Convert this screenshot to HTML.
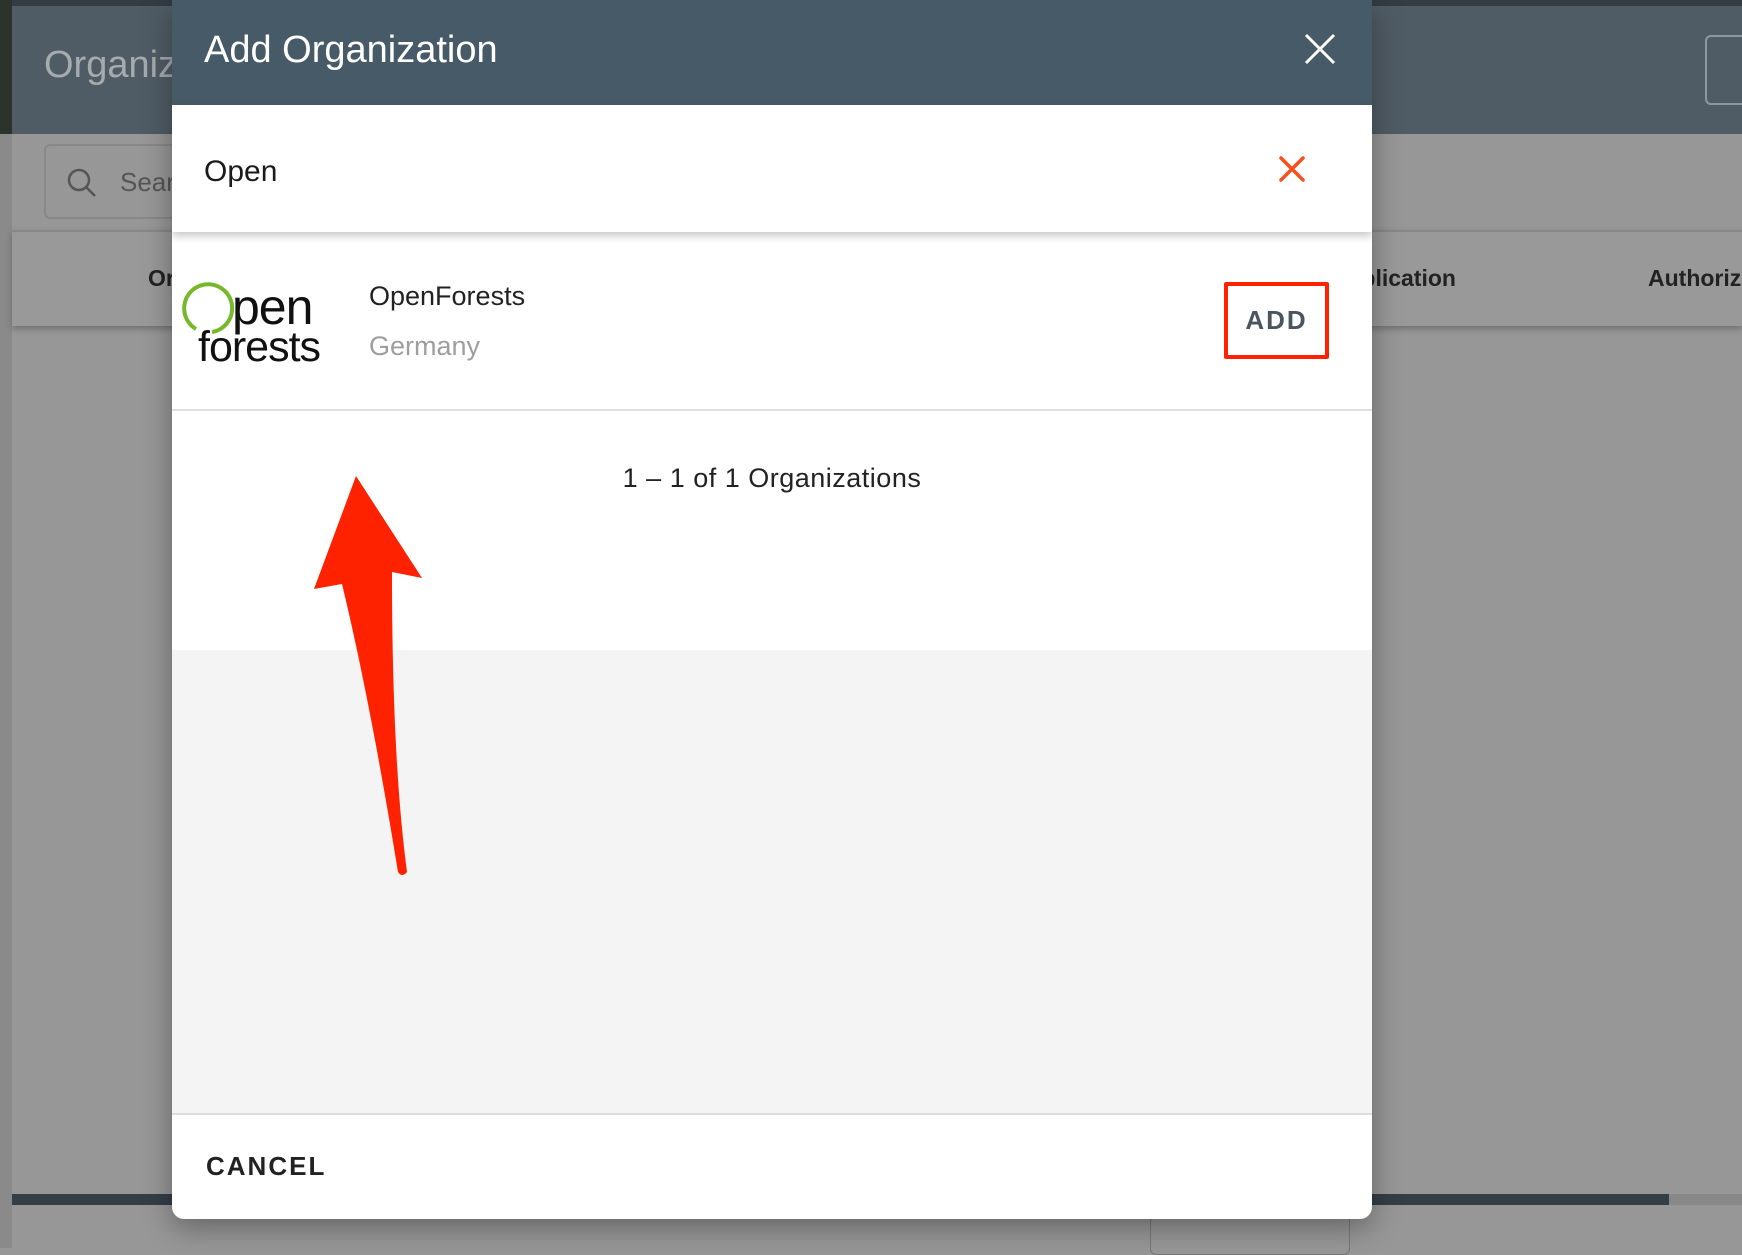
<!DOCTYPE html>
<html><head><meta charset="utf-8"><style>
*{margin:0;padding:0;box-sizing:border-box}
body{width:1742px;height:1248px;overflow:hidden;background:#979797;font-family:"Liberation Sans",sans-serif;position:relative}
.abs{position:absolute}
</style></head><body>
<div class="abs" style="left:0;top:0;width:1742px;height:6px;background:#333c43"></div>
<div class="abs" style="left:0;top:6px;width:1742px;height:128px;background:#505c65"></div>
<div class="abs" style="left:0;top:0;width:12px;height:134px;background:#2c332c"></div>
<div class="abs" style="left:0;top:134px;width:12px;height:1114px;background:#8a8a8a"></div>
<div class="abs" style="left:44px;top:44px;font-size:38px;color:#a6abae">Organiz</div>
<div class="abs" style="left:1705px;top:35px;width:60px;height:70px;border:2px solid #8f989e;border-radius:6px"></div>
<div class="abs" style="left:44px;top:144px;width:160px;height:75px;border:2px solid #888;border-radius:6px"></div>
<svg class="abs" style="left:66px;top:167px" width="32" height="32" viewBox="0 0 32 32"><circle cx="13" cy="13" r="10" fill="none" stroke="#555" stroke-width="2.5"/><line x1="20" y1="20" x2="29" y2="29" stroke="#555" stroke-width="2.5"/></svg>
<div class="abs" style="left:120px;top:167px;font-size:26px;color:#555">Sear</div>
<div class="abs" style="left:12px;top:230px;width:1730px;height:96px;background:#999;border-top:2px solid #888;box-shadow:0 3px 6px rgba(0,0,0,.25)"></div>
<div class="abs" style="left:148px;top:265px;font-size:23px;font-weight:bold;color:#222">Or</div>
<div class="abs" style="left:1332px;top:265px;font-size:23px;font-weight:bold;color:#222">Publication</div>
<div class="abs" style="left:1648px;top:265px;font-size:23px;font-weight:bold;color:#222">Authorization</div>
<div class="abs" style="left:12px;top:1194px;width:1657px;height:11px;background:#343e45"></div>
<div class="abs" style="left:1669px;top:1194px;width:73px;height:11px;background:#888"></div>
<div class="abs" style="left:1150px;top:1215px;width:200px;height:40px;border:1px solid #777;border-radius:6px"></div>

<div class="abs" style="left:172px;top:0;width:1200px;height:1219px;background:#fff;border-radius:0 0 12px 12px;overflow:hidden;box-shadow:0 8px 30px rgba(0,0,0,.35)">
  <div class="abs" style="left:0;top:0;width:1200px;height:105px;background:#475a67"></div>
  <div class="abs" style="left:32px;top:29px;font-size:38px;color:#fff">Add Organization</div>
  <svg class="abs" style="left:1132px;top:33px" width="32" height="32" viewBox="0 0 32 32"><path d="M2 2L30 30M30 2L2 30" stroke="#fff" stroke-width="3"/></svg>
  <div class="abs" style="left:0;top:105px;width:1200px;height:127px;background:#fff;box-shadow:0 4px 8px rgba(0,0,0,.22);z-index:2"></div>
  <div class="abs" style="left:32px;top:155px;font-size:30px;color:#1a1a1a;z-index:3">Open</div>
  <svg class="abs" style="left:1106px;top:155px;z-index:3" width="28" height="28" viewBox="0 0 28 28"><path d="M3 3L25 25M25 3L3 25" stroke="#f4511e" stroke-width="3.5" stroke-linecap="round"/></svg>
  <svg class="abs" style="left:8px;top:274px" width="160" height="95" viewBox="0 0 160 95">
    <path d="M16 55 A24 24 0 1 1 32 58" fill="none" stroke="#76b82a" stroke-width="4"/>
    <text x="52" y="50" font-family="Liberation Sans,sans-serif" font-size="50" fill="#111" letter-spacing="-1">pen</text>
    <text x="18" y="87" font-family="Liberation Sans,sans-serif" font-size="43" fill="#111" letter-spacing="-1">forests</text>
  </svg>
  <div class="abs" style="left:197px;top:281px;font-size:27px;color:#222">OpenForests</div>
  <div class="abs" style="left:197px;top:331px;font-size:27px;color:#9e9e9e">Germany</div>
  <div class="abs" style="left:1052px;top:282px;width:105px;height:77px;border:4px solid #ff2200;border-radius:2px;display:flex;align-items:center;justify-content:center;font-size:26px;letter-spacing:2px;color:#4a5560;font-weight:bold">ADD</div>
  <div class="abs" style="left:0;top:409px;width:1200px;height:2px;background:#e0e0e0"></div>
  <div class="abs" style="left:0;top:463px;width:1200px;text-align:center;font-size:27px;color:#222;letter-spacing:0.5px">1 – 1 of 1 Organizations</div>
  <div class="abs" style="left:0;top:650px;width:1200px;height:463px;background:#f4f4f4"></div>
  <div class="abs" style="left:0;top:1113px;width:1200px;height:2px;background:#dcdcdc"></div>
  <div class="abs" style="left:34px;top:1151px;font-size:26px;font-weight:bold;letter-spacing:2px;color:#222">CANCEL</div>
</div>
<svg class="abs" style="left:0;top:0" width="1742" height="1248" viewBox="0 0 1742 1248">
  <path d="M356 476 L422 578 L392 572 Q392 760 407 872 Q402 878 398 872 Q370 700 342 584 L314 589 Z" fill="#ff2200"/>
</svg>
</body></html>
